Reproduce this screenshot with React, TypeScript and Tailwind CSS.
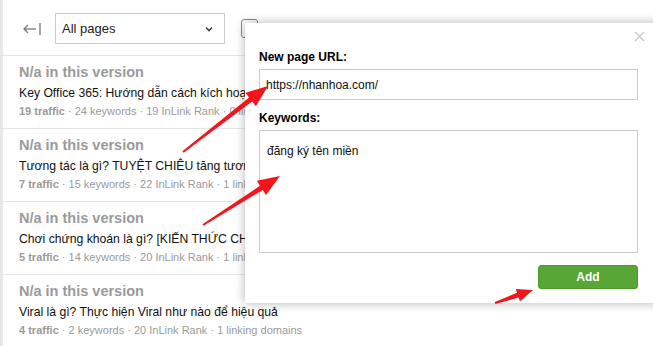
import React from 'react';

const rows = [
  { title: 'Key Office 365: Hướng dẫn cách kích hoạt Office 365 miễn phí', traffic: 19, keywords: 24, rank: 19, domains: 0 },
  { title: 'Tương tác là gì? TUYỆT CHIÊU tăng tương tác Facebook hiệu quả', traffic: 7, keywords: 15, rank: 22, domains: 1 },
  { title: 'Chơi chứng khoán là gì? [KIẾN THỨC CHỨNG KHOÁN] cơ bản', traffic: 5, keywords: 14, rank: 20, domains: 1 },
  { title: 'Viral là gì? Thực hiện Viral như nào để hiệu quả', traffic: 4, keywords: 2, rank: 20, domains: 1 },
];

// polygon for a red annotation arrow, tail -> tip
const arrowPoints = (x1: number, y1: number, x2: number, y2: number, head: number, headW: number, shaft: number) => {
  const dx = x2 - x1;
  const dy = y2 - y1;
  const len = Math.sqrt(dx * dx + dy * dy);
  const ux = dx / len;
  const uy = dy / len;
  const nx = -uy;
  const ny = ux;
  const bx = x2 - ux * head;
  const by = y2 - uy * head;
  const pts = [
    [x1 + nx * 1, y1 + ny * 1],
    [bx + nx * shaft / 2, by + ny * shaft / 2],
    [bx + nx * headW / 2, by + ny * headW / 2],
    [x2, y2],
    [bx - nx * headW / 2, by - ny * headW / 2],
    [bx - nx * shaft / 2, by - ny * shaft / 2],
    [x1 - nx * 1, y1 - ny * 1],
  ];
  return pts.map((p) => p.join(',')).join(' ');
};

const App = () => {
  return (
    <div className="relative w-[653px] h-[346px] overflow-hidden bg-white font-['Liberation_Sans',Arial,sans-serif]">
      <div className="flex h-full">
        <div className="w-[3px] bg-[#e6e6e6]" />
        <div className="flex-1">
          {/* Toolbar */}
          <div className="h-[56px] flex items-start border-b border-[#e6e6e6]">
            <div className="ml-[19px] mt-[21px] w-[22px] h-[16px] flex items-center">
              <svg width="20" height="16" viewBox="0 0 20 16" fill="none" stroke="#777" strokeWidth="1.3">
                <path d="M2 8 H14" />
                <path d="M6 4 L2 8 L6 12" />
                <path d="M18 2 V14" />
              </svg>
            </div>
            <div className="ml-[11px] mt-[13px] w-[170px] h-[31px] border border-[#cccccc] flex items-center justify-between pl-[6px] pr-[10px] text-[13px] text-[#222]">
              <span>All pages</span>
              <svg width="10" height="6" viewBox="0 0 10 6" fill="none" stroke="#444" strokeWidth="1.6">
                <path d="M2 1.5 L5 4.5 L8 1.5" />
              </svg>
            </div>
            <div className="ml-[16px] mt-[19px] w-[17px] h-[19px] border border-[#888] rounded-[3px]" />
          </div>
          {/* Rows */}
          {rows.map((r, i) => (
            <div key={i} className="h-[73px] border-b border-[#e6e6e6] pl-[16px] pt-[7px]">
              <div className="text-[14.5px] leading-[18px] font-bold text-[#9a9a9a]">N/a in this version</div>
              <div className="mt-[4px] text-[12.2px] leading-[17px] text-[#111] whitespace-nowrap">{r.title}</div>
              <div className="mt-[1px] text-[11px] leading-[17px] text-[#9a9a9a] whitespace-nowrap">
                <span className="font-bold">{r.traffic} traffic</span> · {r.keywords} keywords · {r.rank} InLink Rank · {r.domains} linking domains
              </div>
            </div>
          ))}
        </div>
      </div>

      {/* Modal */}
      <div className="absolute left-[245px] top-[23px] w-[420px] h-[280px] bg-white shadow-[0_0_10px_rgba(0,0,0,0.3)] pl-[14px] pt-[26px]">
        <div className="absolute left-[389px] top-[8px] text-[#c8c8c8]">
          <svg width="11" height="11" viewBox="0 0 11 11" stroke="currentColor" strokeWidth="1.2">
            <path d="M1 1 L10 10 M10 1 L1 10" />
          </svg>
        </div>
        <div className="text-[12px] leading-[16px] font-bold text-black">New page URL:</div>
        <div className="mt-[4px] w-[379px] h-[31px] border border-[#cccccc] flex items-center pl-[6px] text-[12px] text-[#111]">
          https://nhanhoa.com/
        </div>
        <div className="mt-[10px] text-[12px] leading-[16px] font-bold text-black">Keywords:</div>
        <div className="mt-[4px] w-[379px] h-[123px] border border-[#cccccc] pl-[7px] pt-[12px] text-[12px] leading-[16px] text-[#111]">
          đăng ký tên miền
        </div>
        <div className="mt-[12px] flex justify-end w-[379px]">
          <button className="w-[100px] h-[24px] rounded-[3px] bg-[#58a636] border border-[#4c9a2e] text-white text-[12px] font-bold">
            Add
          </button>
        </div>
      </div>

      {/* Red annotation arrows */}
      <svg className="absolute inset-0 pointer-events-none" width="653" height="346">
        <polygon points={arrowPoints(183, 152, 268, 86, 22, 17, 5)} fill="#f5141c" />
        <polygon points={arrowPoints(203, 225, 280, 176, 22, 17, 5)} fill="#f5141c" />
        <polygon points={arrowPoints(495, 303, 533, 290, 16, 13, 5)} fill="#f5141c" />
      </svg>
    </div>
  );
};

export default App;
